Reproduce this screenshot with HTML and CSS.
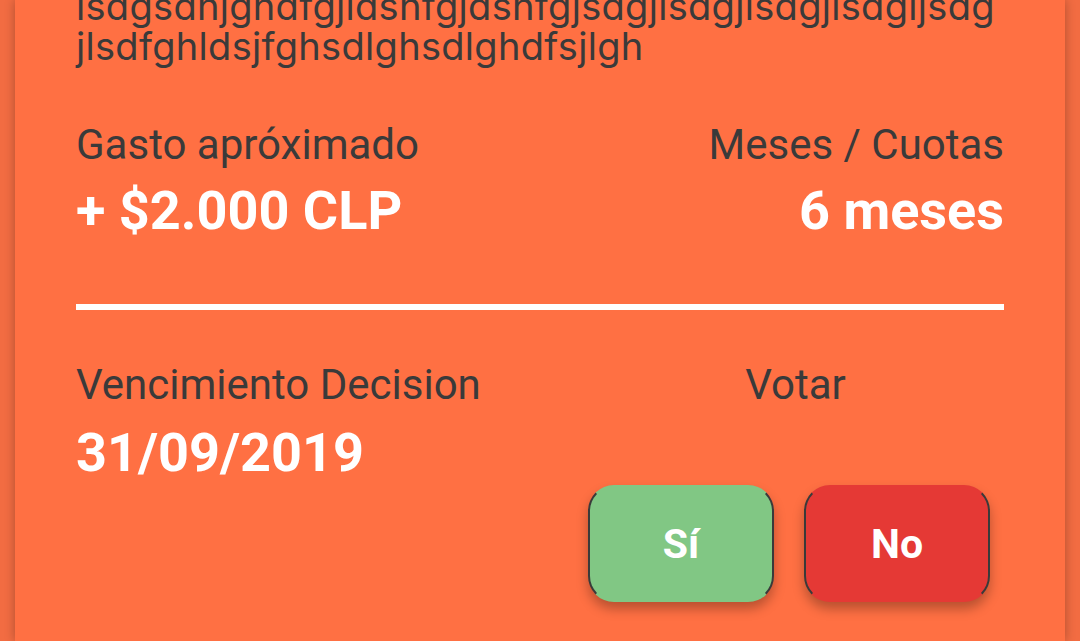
FILE: index.html
```html
<!DOCTYPE html>
<html lang="es">
<head>
<meta charset="utf-8">
<link rel="stylesheet" href="styles.css">
</head>
<body>
<div class="card">
  <p class="desc">lsdgsdhjghdfgjldshfgjdshfgjsdgjlsdgjlsdgjlsdgljsdg<br>jlsdfghldsjfghsdlghsdlghdfsjlgh</p>
  <div class="row row-cost">
    <div class="col">
      <div class="label">Gasto apróximado</div>
      <div class="value">+ $2.000 CLP</div>
    </div>
    <div class="col col-right">
      <div class="label">Meses / Cuotas</div>
      <div class="value">6 meses</div>
    </div>
  </div>
  <div class="divider"></div>
  <div class="row row-vote">
    <div class="col">
      <div class="label">Vencimiento Decision</div>
      <div class="value">31/09/2019</div>
    </div>
    <div class="col vote">
      <div class="label vote-label">Votar</div>
      <div class="buttons">
        <button class="btn btn-yes">Sí</button>
        <button class="btn btn-no">No</button>
      </div>
    </div>
  </div>
</div>
</body>
</html>
```
FILE: styles.css
```css
html, body {
  margin: 0;
  padding: 0;
  height: 100%;
  overflow: hidden;
}
body {
  background: #f26c42;
  padding: 0 15px;
  box-sizing: border-box;
}
.card {
  display: flow-root;
  height: 100%;
  background: #ff7043;
  box-shadow: 0 0 10px rgba(0, 0, 0, 0.28);
  padding: 0 61px;
  box-sizing: border-box;
  font-family: Roboto, "Liberation Sans", sans-serif;
  color: #3a3a3a;
}
.desc {
  margin: -14px 0 0;
  font-family: Inter, "Noto Sans", sans-serif;
  font-size: 38px;
  line-height: 40px;
  letter-spacing: 0.3px;
  white-space: nowrap;
  color: #3a3a3a;
}
.row {
  display: flex;
  justify-content: space-between;
}
.row-cost {
  margin-top: 54px;
}
.col-right {
  text-align: right;
}
.label {
  font-size: 42px;
  line-height: 50px;
}
.value {
  margin-top: 9px;
  font-size: 54px;
  line-height: 64px;
  font-weight: 700;
  color: #ffffff;
}
.divider {
  margin-top: 61px;
  height: 6px;
  background: #ffffff;
}
.row-vote {
  margin-top: 50px;
}
.row-vote .value {
  margin-top: 11px;
}
.vote {
  width: 417px;
  display: flex;
  flex-direction: column;
}
.vote-label {
  text-align: center;
}
.buttons {
  margin-top: 75px;
  display: flex;
  gap: 30px;
  padding-right: 14px;
  justify-content: flex-end;
}
.btn {
  box-sizing: border-box;
  width: 186px;
  height: 117px;
  border-radius: 26px;
  border: 2px solid #3a3a3a;
  border-top-color: transparent;
  border-bottom-color: transparent;
  box-shadow: 0 7px 12px rgba(0, 0, 0, 0.28);
  font-family: Roboto, "Liberation Sans", sans-serif;
  font-size: 41px;
  font-weight: 700;
  color: #ffffff;
  padding: 0;
}
.btn-yes {
  background-color: #81c784;
}
.btn-no {
  background-color: #e53935;
}
```
